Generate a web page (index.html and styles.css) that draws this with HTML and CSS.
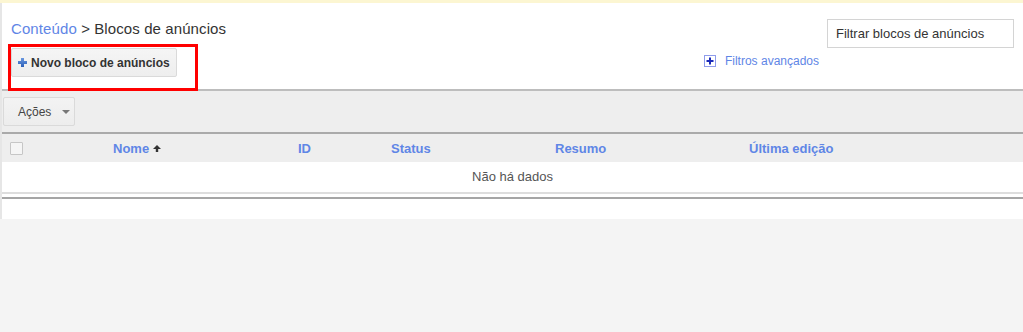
FILE: index.html
```html
<!DOCTYPE html>
<html lang="pt">
    <head>
        <meta charset="UTF-8">
        <meta name="viewport" content="width=device-width, initial-scale=1.0">
        <title>Blocos de anúncios</title>
        <link rel="stylesheet" href="styles.css">
    </head>
    <body>
        <div class="faixa-topo"></div>

        <div class="pagina">
            <!-- Cabeçalho: breadcrumb, filtro e botão novo -->
            <div class="cabecalho">
                <div class="linha">
                    <div class="breadcrumb">
                        <a href="#" class="link">Conteúdo</a> &gt; Blocos de anúncios
                    </div>
                    <input type="text" class="filtro" placeholder="Filtrar blocos de anúncios">
                </div>
                <div class="linha linha-centro">
                    <button class="botao botao-novo">
                        <svg width="9" height="9" viewBox="0 0 9 9">
                            <defs>
                                <linearGradient id="azul" x1="0" y1="0" x2="0" y2="1">
                                    <stop offset="0" stop-color="#6a98e0"/>
                                    <stop offset="1" stop-color="#2c5fb8"/>
                                </linearGradient>
                            </defs>
                            <path d="M3 0h3v3h3v3H6v3H3V6H0V3h3z" fill="url(#azul)"/>
                        </svg>
                        Novo bloco de anúncios
                    </button>
                    <a href="#" class="filtros-avancados">
                        <svg width="12" height="12" viewBox="0 0 12 12">
                            <rect x="0.5" y="0.5" width="11" height="11" fill="#fff" stroke="#8f9cec"/>
                            <path d="M5 2.5h2v2.5h2.5v2H7v2.5H5V7H2.5V5H5z" fill="#1b2ab8"/>
                        </svg>
                        <span>Filtros avançados</span>
                    </a>
                </div>
                <!-- Marcação vermelha em volta do botão -->
                <div class="destaque"></div>
            </div>

            <!-- Barra de ações -->
            <div class="barra-acoes">
                <button class="botao botao-acoes">
                    Ações
                    <span class="seta-baixo"></span>
                </button>
            </div>

            <!-- Tabela -->
            <div class="tabela">
                <div class="tabela-cabecalho">
                    <div class="col"><span class="caixa"></span></div>
                    <div class="col">
                        <a href="#" class="link">Nome</a>
                        <svg class="seta-ordem" width="8" height="7" viewBox="0 0 8 7">
                            <path d="M4 0L8 4H5.2V7H2.8V4H0z" fill="#333"/>
                        </svg>
                    </div>
                    <div class="col"><a href="#" class="link">ID</a></div>
                    <div class="col"><a href="#" class="link">Status</a></div>
                    <div class="col"><a href="#" class="link">Resumo</a></div>
                    <div class="col"><a href="#" class="link">Última edição</a></div>
                </div>
                <div class="sem-dados">Não há dados</div>
            </div>
            <div class="rodape-tabela"></div>
        </div>
    </body>
</html>
```

FILE: styles.css
```css
/* Estilos da lista de blocos de anúncios */
body {
    font-family: "Liberation Sans", Arial, sans-serif;
    background-color: #f4f4f4;
    margin: 0;
    color: #333;
}
a {
    text-decoration: none;
}
.link {
    color: #5f86e6;
}
.faixa-topo {
    height: 3px;
    background-color: #fcf6d2;
}
.pagina {
    background-color: white;
    border-left: 2px solid #e6e6e6;
}
.cabecalho {
    position: relative;
    padding: 16px 9px 12px 9px;
}
.linha {
    display: flex;
    justify-content: space-between;
    align-items: flex-start;
    height: 29px;
}
.linha-centro {
    align-items: center;
}
.breadcrumb {
    font-size: 15px;
    line-height: 18px;
    padding-top: 1px;
    letter-spacing: 0.1px;
}
.filtro {
    width: 187px;
    height: 29px;
    box-sizing: border-box;
    border: 1px solid #d4d4d4;
    padding: 0 8px;
    font-family: inherit;
    font-size: 13px;
    color: #333;
    outline: none;
}
.filtro::placeholder {
    color: #333;
}
.botao {
    font-family: inherit;
    font-size: 12px;
    color: #333;
    background: linear-gradient(#f5f5f5, #eeeeee);
    border: 1px solid #dadada;
    border-radius: 2px;
    cursor: pointer;
    display: flex;
    align-items: center;
    box-sizing: border-box;
}
.botao-novo {
    height: 29px;
    width: 166px;
    padding: 0 0 0 6px;
    gap: 4px;
    font-weight: bold;
}
.filtros-avancados {
    display: flex;
    align-items: center;
    gap: 9px;
    margin-right: 195px;
    margin-top: -4px;
    font-size: 12px;
    color: #5f86e6;
}
.destaque {
    position: absolute;
    top: 41px;
    left: 6px;
    width: 190px;
    height: 47px;
    box-sizing: border-box;
    border: 3px solid #f00;
}
.barra-acoes {
    border-top: 2px solid #bdbdbd;
    background-color: #eeeeee;
    padding: 6px 1px 0;
    height: 43px;
    box-sizing: border-box;
}
.botao-acoes {
    height: 29px;
    width: 72px;
    padding: 0 0 0 14px;
    gap: 11px;
    color: #444;
    background: linear-gradient(#f3f3f3, #ededed);
}
.seta-baixo {
    width: 0;
    height: 0;
    border-left: 4px solid transparent;
    border-right: 4px solid transparent;
    border-top: 4px solid #777;
}
.tabela-cabecalho {
    display: grid;
    grid-template-columns: 111px 185px 93px 164px 194px 1fr;
    align-items: center;
    height: 30px;
    box-sizing: border-box;
    border-top: 2px solid #aaaaaa;
    background-color: #eeeeee;
    font-size: 13px;
    font-weight: bold;
}
.col {
    display: flex;
    align-items: center;
    gap: 4px;
}
.caixa {
    width: 13px;
    height: 13px;
    box-sizing: border-box;
    margin-left: 8px;
    border: 1px solid #c6c6c6;
    border-radius: 1px;
    background-color: #f5f5f5;
}
.seta-ordem {
    margin-top: 1px;
}
.sem-dados {
    height: 30px;
    line-height: 30px;
    text-align: center;
    font-size: 13px;
    color: #555;
    border-bottom: 2px solid #dddddd;
}
.rodape-tabela {
    margin-top: 3px;
    border-top: 2px solid #a5a5a5;
    height: 20px;
}
```
